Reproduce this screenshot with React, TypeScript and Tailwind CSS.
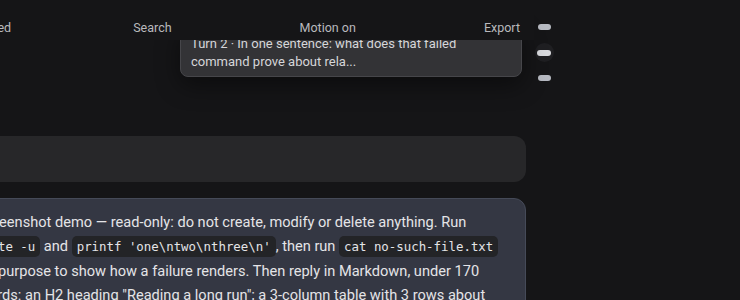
import { ReactNode } from "react";

function Code({ children }: { children: ReactNode }) {
  return (
    <code className="rounded-[5px] bg-[#232427] px-[5px] py-[3px] font-['DejaVu_Sans_Mono',monospace] text-[12.4px] text-[#e4e4e7]">
      {children}
    </code>
  );
}

function RailPill({ active }: { active?: boolean }) {
  if (active) {
    return (
      <div className="flex h-[19px] w-[19px] items-center justify-center rounded-full bg-[#1f1f22]">
        <div className="h-[6px] w-[14px] rounded-full bg-[#d9dade]" />
      </div>
    );
  }
  return <div className="h-[6px] w-[13px] rounded-full bg-[#b6b9c1]" />;
}

export default function App() {
  return (
    <div className="flex h-[300px] w-[740px] overflow-hidden bg-[#151517] font-['Roboto',sans-serif] text-[#e4e4e7]">
      <div className="relative w-[534px] shrink-0">
        <header className="relative z-20 flex h-[40px] items-center justify-end gap-[128px] whitespace-nowrap bg-[#151517] pr-[14px] pt-[16px] text-[12.5px] text-[#b9b9bd]">
          <span className="mr-[-6px] shrink-0">Collapsed</span>
          <span className="shrink-0">Search</span>
          <span className="shrink-0">Motion on</span>
          <span className="shrink-0">Export</span>
        </header>

        <div className="absolute left-[180px] top-[26px] z-10 w-[342px] rounded-[8px] border border-[#46464a] bg-[#333336] px-[10px] pb-[5px] pt-[8px] text-[13px] leading-[18px] text-[#d6d6d9] shadow-[0_8px_24px_rgba(0,0,0,0.45)]">
          Turn 2 · In one sentence: what does that failed
          <br />
          command prove about rela...
        </div>

        <div className="ml-[-39px] flex flex-col gap-[16px] pr-[8px] pt-[96px]">
          <div className="h-[46px] rounded-[12px] bg-[#272729]" />
          <div className="whitespace-nowrap rounded-[12px] border border-[#454a58] bg-[#343743] px-[16px] pb-[16px] pt-[11px] text-[14.6px] leading-[24px]">
            Screenshot demo — read-only: do not create, modify or delete anything. Run
            <br />
            <Code>date -u</Code> and <Code>printf 'one\ntwo\nthree\n'</Code>, then run <Code>cat no-such-file.txt</Code>
            <br />
            on purpose to show how a failure renders. Then reply in Markdown, under 170
            <br />
            words: an H2 heading "Reading a long run"; a 3-column table with 3 rows about
            <br />
            the commands.
          </div>
        </div>
      </div>

      <div className="flex w-[20px] flex-col items-center gap-[13px] pt-[24px]">
        <RailPill />
        <RailPill active />
        <RailPill />
      </div>
    </div>
  );
}
